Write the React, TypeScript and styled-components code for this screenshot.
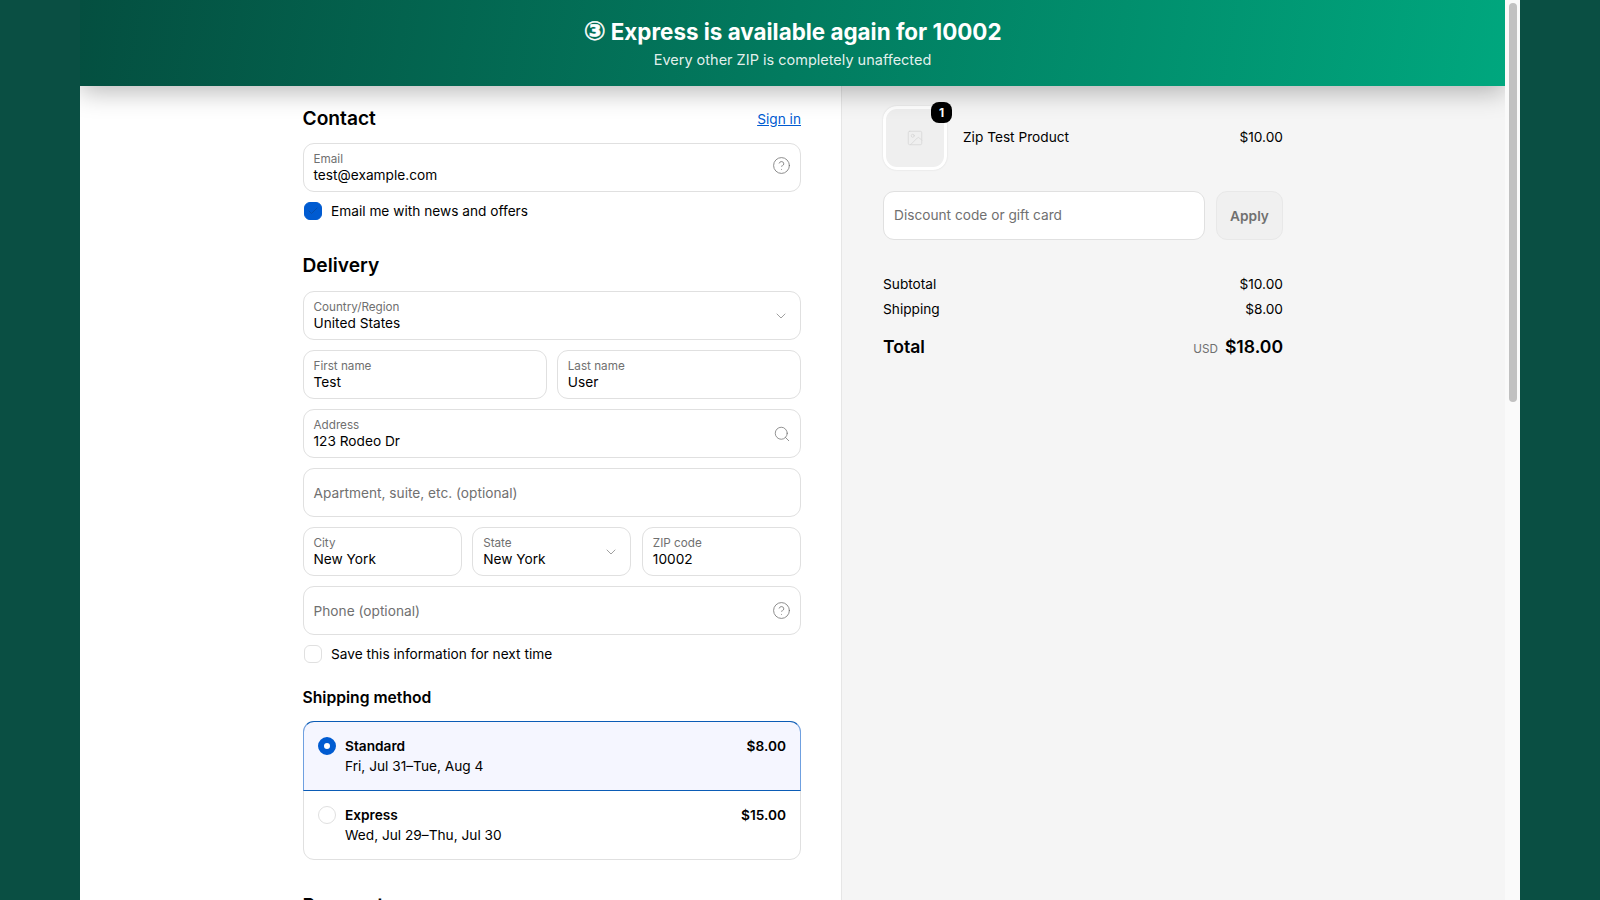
import styled, { createGlobalStyle } from 'styled-components';
import { Check, ChevronDown, CircleHelp, Image as ImageIcon, Search } from 'lucide-react';

const GlobalStyle = createGlobalStyle`
  body {
    margin: 0;
    background: #0a4f43;
    color: #000;
    font-family: Inter, "Liberation Sans", sans-serif;
    font-size: 13.7px;
    overflow: hidden;
  }
  * { box-sizing: border-box; }
`;

export default function App() {
  return (
    <Page>
      <GlobalStyle />
      <Viewport>
        <Content>
          <Banner>
            <BannerTitle><CircledDigit>③</CircledDigit> Express is available again for 10002</BannerTitle>
            <BannerSub>Every other ZIP is completely unaffected</BannerSub>
          </Banner>
          <Columns>
            <Main>
              <SectionHead>
                <Heading>Contact</Heading>
                <SignIn href="#">Sign in</SignIn>
              </SectionHead>
              <Field>
                <FieldText>
                  <FieldLabel>Email</FieldLabel>
                  <FieldValue>test@example.com</FieldValue>
                </FieldText>
                <FieldIcon $right={-0.6} $raised><CircleHelp size={19} strokeWidth={1} /></FieldIcon>
              </Field>
              <CheckRow>
                <Checkbox $checked><Check size={12} strokeWidth={1.5} color="#0a4a9f" /></Checkbox>
                Email me with news and offers
              </CheckRow>

              <DeliveryHeading>Delivery</DeliveryHeading>
              <FieldStack>
                <Field>
                  <FieldText>
                    <FieldLabel>Country/Region</FieldLabel>
                    <FieldValue>United States</FieldValue>
                  </FieldText>
                  <FieldIcon $right={1.5}><ChevronDown size={16} strokeWidth={1} /></FieldIcon>
                </Field>
                <TwoCols>
                  <Field>
                    <FieldText>
                      <FieldLabel>First name</FieldLabel>
                      <FieldValue>Test</FieldValue>
                    </FieldText>
                  </Field>
                  <Field>
                    <FieldText>
                      <FieldLabel>Last name</FieldLabel>
                      <FieldValue>User</FieldValue>
                    </FieldText>
                  </Field>
                </TwoCols>
                <Field>
                  <FieldText>
                    <FieldLabel>Address</FieldLabel>
                    <FieldValue>123 Rodeo Dr</FieldValue>
                  </FieldText>
                  <FieldIcon $right={-1}><Search size={18} strokeWidth={1} /></FieldIcon>
                </Field>
                <Field>
                  <Placeholder>Apartment, suite, etc. (optional)</Placeholder>
                </Field>
                <ThreeCols>
                  <Field>
                    <FieldText>
                      <FieldLabel>City</FieldLabel>
                      <FieldValue>New York</FieldValue>
                    </FieldText>
                  </Field>
                  <Field>
                    <FieldText>
                      <FieldLabel>State</FieldLabel>
                      <FieldValue>New York</FieldValue>
                    </FieldText>
                    <FieldIcon $right={1.5}><ChevronDown size={16} strokeWidth={1} /></FieldIcon>
                  </Field>
                  <Field>
                    <FieldText>
                      <FieldLabel>ZIP code</FieldLabel>
                      <FieldValue>10002</FieldValue>
                    </FieldText>
                  </Field>
                </ThreeCols>
                <Field>
                  <Placeholder>Phone (optional)</Placeholder>
                  <FieldIcon $right={-0.6}><CircleHelp size={19} strokeWidth={1} /></FieldIcon>
                </Field>
              </FieldStack>
              <CheckRow>
                <Checkbox />
                Save this information for next time
              </CheckRow>

              <SubHeading>Shipping method</SubHeading>
              <ShippingBox>
                <ShippingOption $selected>
                  <Radio $selected />
                  <OptionText>
                    <OptionName>Standard</OptionName>
                    <OptionDate>Fri, Jul 31–Tue, Aug 4</OptionDate>
                  </OptionText>
                  <OptionPrice>$8.00</OptionPrice>
                </ShippingOption>
                <ShippingOption>
                  <Radio />
                  <OptionText>
                    <OptionName>Express</OptionName>
                    <OptionDate>Wed, Jul 29–Thu, Jul 30</OptionDate>
                  </OptionText>
                  <OptionPrice>$15.00</OptionPrice>
                </ShippingOption>
              </ShippingBox>

              <PaymentHeading>Payment</PaymentHeading>
            </Main>

            <Summary>
              <ProductRow>
                <Thumb>
                  <ImageIcon size={18} strokeWidth={1} color="#d4d4d4" />
                  <Badge>1</Badge>
                </Thumb>
                <ProductName>Zip Test Product</ProductName>
                <ProductPrice>$10.00</ProductPrice>
              </ProductRow>
              <DiscountRow>
                <DiscountInput>Discount code or gift card</DiscountInput>
                <ApplyButton>Apply</ApplyButton>
              </DiscountRow>
              <TotalLine>
                <span>Subtotal</span>
                <span>$10.00</span>
              </TotalLine>
              <ShippingLine>
                <span>Shipping</span>
                <span>$8.00</span>
              </ShippingLine>
              <GrandTotal>
                <span>Total</span>
                <GrandAmount>
                  <Currency>USD</Currency>
                  $18.00
                </GrandAmount>
              </GrandTotal>
            </Summary>
          </Columns>
        </Content>
        <ScrollTrack>
          <ScrollThumb />
        </ScrollTrack>
      </Viewport>
    </Page>
  );
}

const Page = styled.div`
  display: flex;
  justify-content: center;
  height: 900px;
`;

const Viewport = styled.div`
  display: flex;
  width: 1440px;
  height: 900px;
  background: #fff;
`;

const Content = styled.div`
  display: flex;
  flex-direction: column;
  flex: 1;
  min-width: 0;
  overflow: hidden;
`;

const ScrollTrack = styled.div`
  flex: none;
  width: 15px;
  padding: 3px 3px 0 4px;
  background: #fafafa;
`;

const ScrollThumb = styled.div`
  height: 399px;
  background: #c1c1c1;
  border-radius: 4px;
`;

const Banner = styled.header`
  position: relative;
  z-index: 2;
  flex: none;
  height: 86px;
  padding-top: 16px;
  text-align: center;
  color: #fff;
  background: linear-gradient(100deg, #044f40 0%, #00a77e 100%);
  box-shadow: 0 6px 24px rgba(0, 0, 0, 0.28);
`;

const BannerTitle = styled.div`
  height: 32px;
  font-size: 22.4px;
  line-height: 32px;
  font-weight: 700;
`;

const CircledDigit = styled.span`
  font-family: "DejaVu Sans", sans-serif;
  font-size: 26px;
  line-height: 1;
  font-weight: 700;
  -webkit-text-stroke: 0.5px #fff;
`;

const BannerSub = styled.div`
  font-size: 14.5px;
  line-height: 24px;
  color: rgba(255, 255, 255, 0.9);
`;

const Columns = styled.div`
  display: grid;
  flex: 1;
  grid-template-columns: 762px 1fr;
`;

const Main = styled.main`
  padding: 18px 40px 0 222.5px;
  background: #fff;
  border-right: 1px solid #e6e6e6;
`;

const Summary = styled.aside`
  padding: 20px 0 0 41px;
  background: #f5f5f5;
`;

const SectionHead = styled.div`
  display: flex;
  align-items: center;
  justify-content: space-between;
  height: 28px;
  margin-bottom: 11px;
`;

const Heading = styled.h2`
  margin: 0;
  font-size: 19.2px;
  line-height: 28px;
  font-weight: 600;
`;

const DeliveryHeading = styled(Heading)`
  margin: 31px 0 12px;
`;

const PaymentHeading = styled(Heading)`
  margin-top: 31px;
`;

const SubHeading = styled.h3`
  margin: 23px 0 11px;
  font-size: 15.7px;
  line-height: 24px;
  font-weight: 600;
`;

const SignIn = styled.a`
  margin-top: 2px;
  color: #005bd1;
`;

const FieldStack = styled.div`
  display: flex;
  flex-direction: column;
  gap: 10px;
`;

const TwoCols = styled.div`
  display: grid;
  grid-template-columns: 1fr 1fr;
  gap: 10px;
`;

const ThreeCols = styled.div`
  display: grid;
  grid-template-columns: repeat(3, 1fr);
  gap: 10.5px;
`;

const Field = styled.div`
  display: flex;
  align-items: center;
  justify-content: space-between;
  height: 49px;
  padding: 0 10px;
  background: #fff;
  border: 1px solid #e0e0e0;
  border-radius: 11px;
`;

const FieldText = styled.div`
  display: flex;
  flex-direction: column;
  padding-bottom: 1px;
`;

const FieldLabel = styled.span`
  font-size: 11.7px;
  line-height: 16px;
  color: #707070;
`;

const FieldValue = styled.span`
  line-height: 17px;
`;

const Placeholder = styled.span`
  color: #707070;
`;

const FieldIcon = styled.span<{ $right?: number; $raised?: boolean }>`
  display: flex;
  color: #707070;
  margin-right: ${(p) => p.$right ?? 0}px;
  margin-bottom: ${(p) => (p.$raised ? '4px' : '0')};
`;

const CheckRow = styled.div`
  display: flex;
  align-items: center;
  gap: 9.5px;
  margin-top: 9px;
  height: 19px;
  margin-left: 1px;
`;

const Checkbox = styled.span<{ $checked?: boolean }>`
  display: flex;
  align-items: center;
  justify-content: center;
  width: 18px;
  height: 18px;
  border-radius: 6px;
  background: ${(p) => (p.$checked ? '#005bd1' : '#fff')};
  border: 1px solid ${(p) => (p.$checked ? '#005bd1' : '#e0e0e0')};
`;

const ShippingBox = styled.div`
  border: 1px solid #e0e0e0;
  border-radius: 11px;
  height: 139px;
`;

const ShippingOption = styled.div<{ $selected?: boolean }>`
  display: flex;
  align-items: flex-start;
  height: ${(p) => (p.$selected ? '70px' : '69px')};
  margin: ${(p) => (p.$selected ? '-1px -1px 0' : '0')};
  padding: 14px;
  background: ${(p) => (p.$selected ? '#f5f6ff' : 'transparent')};
  border: ${(p) => (p.$selected ? '1px solid #0b5cb6' : 'none')};
  border-left-color: ${(p) => (p.$selected ? '#6fa0e0' : 'transparent')};
  border-right-color: ${(p) => (p.$selected ? '#6fa0e0' : 'transparent')};
  border-radius: ${(p) => (p.$selected ? '11px 11px 0 0' : '0')};
`;

const Radio = styled.span<{ $selected?: boolean }>`
  flex: none;
  width: 18px;
  height: 18px;
  margin-top: 1px;
  border-radius: 50%;
  background: #fff;
  border: ${(p) => (p.$selected ? '6px solid #005bd1' : '1px solid #e0e0e0')};
`;

const OptionText = styled.div`
  flex: 1;
  margin-left: 9.5px;
`;

const OptionName = styled.div`
  font-weight: 600;
  line-height: 20px;
`;

const OptionDate = styled.div`
  line-height: 20px;
`;

const OptionPrice = styled.div`
  font-weight: 600;
  line-height: 20px;
`;

const ProductRow = styled.div`
  display: flex;
  align-items: center;
  width: 400px;
  height: 64px;
`;

const Thumb = styled.div`
  position: relative;
  display: flex;
  align-items: center;
  justify-content: center;
  width: 64px;
  height: 64px;
  background: #efefef;
  border: 3px solid #fff;
  border-radius: 14px;
  box-shadow: 0 0 2px rgba(0, 0, 0, 0.12);
`;

const Badge = styled.span`
  position: absolute;
  top: -7px;
  right: -8px;
  width: 21px;
  height: 21px;
  border-radius: 8px;
  background: #000;
  color: #fff;
  font-size: 12px;
  font-weight: 700;
  line-height: 21px;
  text-align: center;
`;

const ProductName = styled.span`
  flex: 1;
  margin: 0 0 3px 16px;
`;

const ProductPrice = styled.span`
  margin-bottom: 3px;
`;

const DiscountRow = styled.div`
  display: flex;
  gap: 11px;
  width: 400px;
  margin: 21px 0 32px;
`;

const DiscountInput = styled.div`
  flex: 1;
  height: 49px;
  padding: 0 10px;
  line-height: 47px;
  color: #707070;
  background: #fff;
  border: 1px solid #e0e0e0;
  border-radius: 11px;
`;

const ApplyButton = styled.button`
  width: 67px;
  height: 49px;
  font-family: inherit;
  font-size: 13.7px;
  font-weight: 600;
  color: #707070;
  background: #f0f0f0;
  border: 1px solid #e8e8e8;
  border-radius: 11px;
`;

const TotalLine = styled.div`
  display: flex;
  justify-content: space-between;
  width: 400px;
  line-height: 24px;
`;

const ShippingLine = styled(TotalLine)`
  margin-top: 1px;
`;

const GrandTotal = styled(TotalLine)`
  align-items: baseline;
  margin-top: 12px;
  font-size: 17.6px;
  line-height: 28px;
  font-weight: 600;
`;

const GrandAmount = styled.span`
  display: inline-flex;
  align-items: baseline;
  gap: 7px;
`;

const Currency = styled.span`
  font-size: 11.7px;
  font-weight: 400;
  color: #707070;
`;
